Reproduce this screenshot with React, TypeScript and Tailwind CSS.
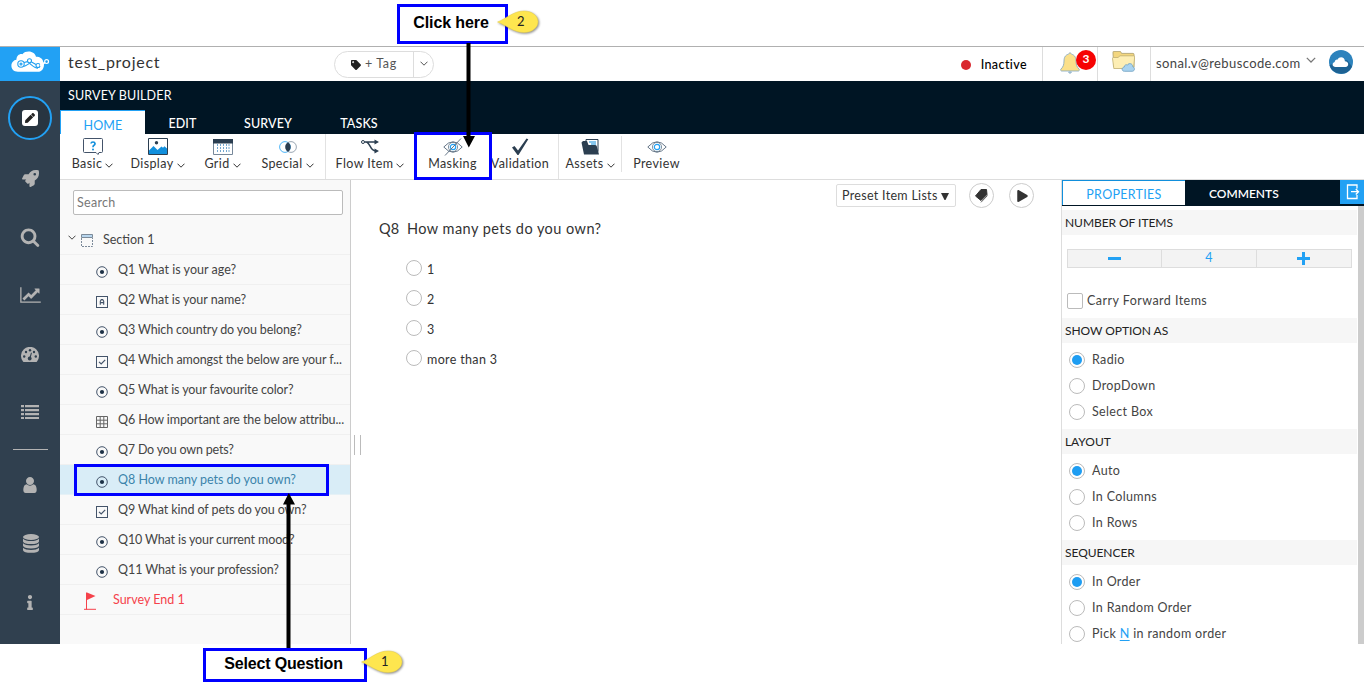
import React, { useState } from 'react';
import { FaRocket, FaInfo, FaTag, FaPen, FaPlay } from 'react-icons/fa';

type QuestionKind = 'radio' | 'text' | 'check' | 'grid';

const questions: { id: string; kind: QuestionKind; label: string; tracking: string }[] = [
  { id: 'Q1', kind: 'radio', label: 'Q1 What is your age?', tracking: 'tracking-[0.03px]' },
  { id: 'Q2', kind: 'text', label: 'Q2 What is your name?', tracking: 'tracking-[-0.02px]' },
  { id: 'Q3', kind: 'radio', label: 'Q3 Which country do you belong?', tracking: 'tracking-[-0.13px]' },
  { id: 'Q4', kind: 'check', label: 'Q4 Which amongst the below are your f...', tracking: 'tracking-[-0.1px]' },
  { id: 'Q5', kind: 'radio', label: 'Q5 What is your favourite color?', tracking: 'tracking-[-0.1px]' },
  { id: 'Q6', kind: 'grid', label: 'Q6 How important are the below attribu...', tracking: 'tracking-[-0.1px]' },
  { id: 'Q7', kind: 'radio', label: 'Q7 Do you own pets?', tracking: 'tracking-[-0.19px]' },
  { id: 'Q8', kind: 'radio', label: 'Q8 How many pets do you own?', tracking: 'tracking-[-0.02px]' },
  { id: 'Q9', kind: 'check', label: 'Q9 What kind of pets do you own?', tracking: 'tracking-[-0.08px]' },
  { id: 'Q10', kind: 'radio', label: 'Q10 What is your current mood?', tracking: 'tracking-[-0.13px]' },
  { id: 'Q11', kind: 'radio', label: 'Q11 What is your profession?', tracking: 'tracking-[-0.06px]' },
];

const Chevron: React.FC<{ className?: string }> = ({ className = 'w-2 h-[5px]' }) => (
  <svg viewBox="0 0 8 5" className={className} fill="none" stroke="currentColor" strokeWidth="1">
    <path d="M0.5 0.7 4 4.2 7.5 0.7" />
  </svg>
);

const QuestionIcon: React.FC<{ kind: QuestionKind }> = ({ kind }) => (
  <svg viewBox="0 0 12 12" className="w-3 h-3 shrink-0 relative top-[2px]" fill="none" stroke="#44546a" strokeWidth="1">
    {kind === 'radio' && (
      <>
        <circle cx="6" cy="6" r="5.3" />
        <circle cx="6" cy="6" r="2.1" fill="#1d3146" stroke="none" />
      </>
    )}
    {kind === 'text' && (
      <>
        <rect x="0.5" y="0.5" width="11" height="11" />
        <path d="M4.3 8.8V5.2L5.300 3.600h1.400l1 1.600v3.600M4.300 6.600h3.400" strokeWidth="1.100" />
      </>
    )}
    {kind === 'check' && (
      <>
        <rect x="0.5" y="0.5" width="11" height="11" />
        <path d="M3 5.800 5.200 8 9.200 3.800" strokeWidth="1.200" />
      </>
    )}
    {kind === 'grid' && (
      <path d="M0.5 0.5h11v11H0.5zM4.2 0.5v11M7.8 0.5v11M0.5 4.2h11M0.5 7.8h11" stroke="#666" />
    )}
  </svg>
);

const Logo = () => (
  <svg viewBox="0 0 40 22" className="w-10 h-[22px] relative -top-[2px]">
    <path
      d="M8 20.8C3.6 20.8 1.4 18 1.4 14.8c0-3.3 2.300-5.700 5-6C6.600 4.800 9.400 2.600 12.400 3.200 13.800 1 16.200 0.400 18.600 0.400c4 0 6.800 2.400 7.400 5.400 4 0 6.800 2 7.200 5l0.800 2.600c0 4-2.300 7.400-6 7.400z"
      fill="#fff"
    />
    <g fill="none" stroke="#1f9ff0" strokeWidth="1.100">
      <circle cx="11" cy="13" r="3.200" />
      <circle cx="11" cy="13" r="1" />
      <circle cx="19.500" cy="9.800" r="2" />
      <circle cx="28" cy="14.500" r="2" />
      <path d="M14 11.500 17.500 10.600M21.500 11l4.500 2.600M13.500 15.500c3-0.500 5-3 6-3s4 4.600 8.500 4.600" />
    </g>
    <path d="M30 14.500 35 11.500" stroke="#fff" strokeWidth="1.600" />
    <circle cx="36.600" cy="10.600" r="1.900" fill="#1f9ff0" stroke="#fff" strokeWidth="1.200" />
  </svg>
);

const Sidebar = () => (
  <aside className="w-[60px] shrink-0 bg-[#30404f] flex flex-col items-center text-[#b3b3b3]">
    <div className="w-full h-[34px] bg-[#22a1f4] flex items-center justify-center">
      <Logo />
    </div>
    <div className="mt-[15px] w-11 h-11 rounded-full border-2 border-[#22a1f4] bg-[#283541] flex items-center justify-center">
      <div className="w-4 h-4 rounded-[3px] bg-white flex items-center justify-center">
        <FaPen className="w-[10px] h-[10px] text-[#222]" />
      </div>
    </div>
    <FaRocket className="mt-[30px] w-[17px] h-[17px]" />
    <svg viewBox="0 0 1792 1792" className="mt-[40px] w-[20px] h-[20px]" fill="currentColor">
      <path d="M1216 832q0-185-131.500-316.500t-316.500-131.500-316.500 131.500-131.500 316.500 131.500 316.500 316.500 131.500 316.500-131.500 131.500-316.500zm512 832q0 52-38 90t-90 38q-54 0-90-38l-343-342q-179 124-399 124-143 0-273.500-55.500t-225-150-150-225-55.500-273.500 55.500-273.500 150-225 225-150 273.500-55.500 273.500 55.500 225 150 150 225 55.500 273.500q0 220-124 399l343 343q37 37 37 90z" />
    </svg>
    <svg viewBox="0 0 2048 1792" className="mt-[39px] w-[21px] h-[18px]" fill="currentColor">
      <path d="M2048 1536v128h-2048v-1536h128v1408h1920zm-128-1248v435q0 21-19.500 29.500t-35.500-7.500l-121-121-633 633q-10 10-23 10t-23-10l-233-233-416 416-192-192 585-585q10-10 23-10t23 10l233 233 464-464-121-121q-16-16-7.500-35.500t29.500-19.500h435q14 0 23 9t9 23z" />
    </svg>
    <svg viewBox="0 0 18 15" className="mt-[43px] w-[18px] h-[15px]" fill="currentColor">
      <path d="M2 14.500A9 9 0 1 1 16 14.500q-0.500 0.500-1 0.500H3q-0.500 0-1-0.500z" />
      <g fill="#30404f">
        <circle cx="3.200" cy="9.500" r="1.200" />
        <circle cx="5" cy="5" r="1.200" />
        <circle cx="9" cy="3.200" r="1.200" />
        <circle cx="13" cy="5" r="1.200" />
        <circle cx="14.800" cy="9.500" r="1.200" />
        <circle cx="8.700" cy="11.500" r="1.900" />
        <path d="M8.300 11 10 5.600l0.900 0.300L9.500 11.500z" />
      </g>
    </svg>
    <svg viewBox="0 0 18 14" className="mt-[43px] w-[18px] h-[14px]" fill="currentColor">
      <path d="M0 0h3v2.300H0zM4 0h14v2.300H4zM0 4h3v2.300H0zM4 4h14v2.300H4zM0 8h3v2.300H0zM4 8h14v2.300H4zM0 12h3v2H0zM4 12h14v2H4z" />
    </svg>
    <div className="mt-[30px] w-[35px] h-px bg-[#b3b3b3]" />
    <svg viewBox="128 128 1536 1536" className="mt-[27px] w-4 h-4" fill="currentColor">
      <path d="M1536 1399q0 109-62.500 187t-150.500 78h-854q-88 0-150.500-78t-62.500-187q0-85 8.500-160.500t31.500-152 58.500-131 94-89 134.500-34.500q131 128 313 128t313-128q76 0 134.500 34.500t94 89 58.500 131 31.500 152 8.500 160.500zm-256-887q0 159-112.500 271.500t-271.500 112.500-271.500-112.500-112.500-271.500 112.500-271.500 271.500-112.500 271.500 112.500 112.500 271.500z" />
    </svg>
    <svg viewBox="0 0 16 19" className="mt-[41px] w-4 h-[19px] relative left-px" fill="currentColor">
      <ellipse cx="8" cy="3" rx="8" ry="3" />
      <path d="M0 4.800q2.500 2.300 8 2.300t8-2.300v2.700q-1 2.600-8 2.600T0 7.500zM0 9.300q2.500 2.200 8 2.200t8-2.200v2.500q-1 2.600-8 2.600t-8-2.600zM0 13.700q2.500 2.200 8 2.200t8-2.200v2.500q-1 2.600-8 2.600t-8-2.600z" />
    </svg>
    <FaInfo className="mt-[42px] w-4 h-[15px]" />
  </aside>
);

const Header = () => (
  <header className="h-[34px] shrink-0 bg-white flex items-center text-[#333]">
    <div className="w-[274px] pl-2 text-base tracking-[0.75px] pb-[4px]">test_project</div>
    <div className="flex items-stretch w-[100px] h-[27px] rounded-full border border-[#ddd] text-[12.5px] tracking-[0.6px] text-[#555]">
      <div className="flex-1 flex items-center gap-1 pl-4 pt-px">
        <FaTag className="w-[10px] h-[10px] text-[#222]" />
        <span>+ Tag</span>
      </div>
      <div className="w-[20px] border-l border-[#ddd] flex items-center justify-center pb-[2px]">
        <Chevron />
      </div>
    </div>
    <div className="ml-auto flex h-full items-stretch">
      <div className="flex items-center gap-[10px] pr-[15px] pt-[2px] text-[12.5px] font-medium tracking-[0.4px] text-black">
        <span className="w-[10px] h-[10px] rounded-full bg-[#d9272e]" />
        Inactive
      </div>
      <div className="w-[55px] border-l border-[#ddd] relative">
        <svg viewBox="0 0 20 22" className="absolute left-[17px] top-[5px] w-5 h-[22px]" fill="#fbe08a" stroke="#7fa3bd" strokeWidth="0.800">
          <path d="M8.500 20h3L10 21.600z" fill="#c5e2f5" />
          <path d="M10 0.500 11.500 2.200C15 3 16 6 16 9c0 4 1 6 3.200 8.300 0.500 1-0.200 1.700-1 1.700H1.800c-0.800 0-1.500-0.700-1-1.700C3 15 4 13 4 9c0-3 1-6 4.500-6.800z" />
        </svg>
        <span className="absolute left-[33px] top-[3px] w-5 h-5 rounded-full bg-[#f60303] text-white text-xs font-bold flex items-center justify-center pb-[3px]">3</span>
      </div>
      <div className="w-[53px] border-l border-[#ddd]">
        <svg viewBox="0 0 23 21" className="mt-[4px] ml-[14px] w-[23px] h-[21px]" strokeWidth="0.800">
          <path d="M1 3V1q0-0.600 0.600-0.600H8q0.600 0 0.900 0.600l0.600 1.400H21q1 0 1 1V16H2z" fill="#f3d67e" stroke="#a99c68" />
          <path d="M0.500 7.500q0-1 1-1H6l2-1.700h14q0.800 0 0.700 1L21.500 17.500H1.800z" fill="#fdeeb4" stroke="#bfae70" />
          <path d="M12.500 20.300c-3 0-3.200-3.800-0.300-4.200 0-2 2-2.900 3.300-2 1.200-2.600 5.300-1.700 5.200 1.600 2.500 0.600 2.300 4.600-0.500 4.600z" fill="#a9d3ef" stroke="#6e9fc0" />
        </svg>
      </div>
      <div className="border-l border-[#ddd] w-[214px] pl-[5px] flex items-center">
        <span className="text-[13px] tracking-[0.4px] text-[#444] w-[150px] whitespace-nowrap">sonal.v@rebuscode.com</span>
        <Chevron className="w-[10px] h-[6px] mb-2 text-[#777]" />
        <svg viewBox="0 0 24 24" className="w-6 h-6 ml-[13px] mb-1">
          <circle cx="12" cy="12" r="12" fill="#2d83bd" />
          <path d="M0.500 15a12 12 0 0 0 22.500 1.500L18 10z" fill="#1d6293" />
          <path d="M6.500 17c-3.300 0-4-4-0.800-5 0-2 1.800-2.900 3-2.400 1.400-4 7.400-2.800 7.200 1.700 4.300 0 4.300 5.700 0.600 5.700z" fill="#fff" />
        </svg>
      </div>
    </div>
  </header>
);

const navTabs = [
  { label: 'EDIT', width: 'w-[75px]' },
  { label: 'SURVEY', width: 'w-[96px]' },
  { label: 'TASKS', width: 'w-[86px]' },
];

const NavBar = () => (
  <nav className="h-[53px] shrink-0 bg-[#001524] text-white flex flex-col">
    <div className="h-[29px] pl-2 text-[12.5px] leading-[30px] tracking-[0.15px]">SURVEY BUILDER</div>
    <div className="flex h-6 text-[12.5px] font-medium tracking-[0.1px]">
      <div className="w-[85px] border-t border-l border-[#22a1f4] bg-white text-[#22a1f4] text-center font-normal leading-[29px]">HOME</div>
      {navTabs.map((tab) => (
        <div key={tab.label} className={`${tab.width} text-center leading-[28px]`}>{tab.label}</div>
      ))}
    </div>
  </nav>
);

const Eye: React.FC<{ slashed?: boolean }> = ({ slashed }) => (
  <svg viewBox="0 0 20 18" className="w-5 h-[18px]" fill="none" stroke="#53677a" strokeWidth="0.900">
    <path d="M0.800 9Q10-1.500 19.200 9 10 19.500 0.800 9z" />
    <circle cx="10" cy="9" r="4.600" strokeWidth="0.700" />
    <circle cx="10" cy="9" r="2.700" stroke="#22a1f4" strokeWidth="1.200" />
    {slashed && <path d="M2 17.500 18 0.500" />}
  </svg>
);

interface RibbonItemProps {
  label: string;
  width: string;
  menu?: boolean;
  children: React.ReactNode;
}

const RibbonItem: React.FC<RibbonItemProps> = ({ label, width, menu, children }) => (
  <div className={`${width} shrink-0 flex flex-col items-center text-[#333]`}>
    <div className="h-[21px] mt-[2px] flex items-center justify-center">{children}</div>
    <div className="flex items-center gap-[3px] text-[12.5px] leading-[14px] tracking-[0.4px] whitespace-nowrap">
      <span>{label}</span>
      {menu && <Chevron className="w-2 h-[5px] mt-[3px]" />}
    </div>
  </div>
);

const Ribbon = () => (
  <div className="h-[46px] shrink-0 bg-white border-b border-[#ddd] flex">
    <RibbonItem label="Basic" width="w-[65px]" menu>
      <svg viewBox="0 0 20 18" className="w-5 h-[18px]">
        <path d="M1.500 0.500h17q1 0 1 1v12q0 1-1 1H16l-1 2-2-2H1.500q-1 0-1-1v-12q0-1 1-1z" fill="#fff" stroke="#44546a" />
        <path d="M8 5.500Q8.200 4 10 4t2 1.700q0 1-1 1.600T10 9.300" fill="none" stroke="#118fdc" strokeWidth="1.700" />
        <circle cx="10" cy="11.500" r="1" fill="#118fdc" />
      </svg>
    </RibbonItem>
    <RibbonItem label="Display" width="w-[65px]" menu>
      <svg viewBox="0 0 20 17" className="w-5 h-[17px]">
        <path d="M0.500 0.500h19v16H0.500z" fill="#fff" stroke="#2b3e50" />
        <path d="M1 12.500 5.500 8l4 4 4-3.500 1.500 1.200 1.500-1.500 2.500 2.300V16H1z" fill="#118fdc" />
        <circle cx="8.500" cy="4.800" r="1.700" fill="#2b3e50" />
      </svg>
    </RibbonItem>
    <RibbonItem label="Grid" width="w-[65px]" menu>
      <svg viewBox="0 0 20 16" className="w-5 h-4">
        <path d="M0.500 0.500h19v15H0.500z" fill="#fff" stroke="#77889a" />
        <path d="M0 0h20v4.500H0z" fill="#2b3e50" />
        <path d="M4.500 5v9M7.500 5v9M10.500 5v9M13.500 5v9M16 5v9" stroke="#73a7cf" strokeDasharray="2 1" />
      </svg>
    </RibbonItem>
    <RibbonItem label="Special" width="w-[65px]" menu>
      <svg viewBox="0 0 18 12" className="w-[18px] h-3" fill="none">
        <circle cx="6" cy="6" r="5.400" stroke="#22a1f4" strokeWidth="0.800" />
        <circle cx="12" cy="6" r="5.400" stroke="#8291a0" strokeWidth="0.800" />
        <path d="M9 1.300a5.500 5.500 0 0 1 0 9.400a5.500 5.500 0 0 1 0-9.400z" fill="#2b3e50" />
      </svg>
    </RibbonItem>
    <div className="w-[6px] border-r border-[#e2e2e2]" />
    <RibbonItem label="Flow Item" width="w-[88px]" menu>
      <svg viewBox="0 0 18 15" className="w-[18px] h-[15px]" fill="none" stroke="#2b3e50" strokeWidth="1.500">
        <circle cx="2" cy="3" r="1.500" strokeWidth="1" />
        <path d="M3.500 3H15M5 3c4 0 4 9 9.500 9H15" />
        <path d="M13.500 0.500 18 3l-4.500 2.500zM13.500 9.500 18 12l-4.500 2.500z" fill="#2b3e50" stroke="none" />
      </svg>
    </RibbonItem>
    <RibbonItem label="Masking" width="w-[77px]">
      <Eye slashed />
    </RibbonItem>
    <RibbonItem label="Validation" width="w-[58px]">
      <svg viewBox="0 0 18 17" className="w-[18px] h-[17px]">
        <path d="M1 9.500 3.500 8 7 12.500 15.500 0.500l1.800 0.800L7.500 17H6.500z" fill="#2b3e50" />
      </svg>
    </RibbonItem>
    <div className="w-[10px] border-r border-[#e2e2e2]" />
    <RibbonItem label="Assets" width="w-[62px]" menu>
      <svg viewBox="0 0 18 16" className="w-[18px] h-4">
        <path d="M5 0.500h12v12H5z" fill="#fff" stroke="#2b3e50" />
        <path d="M8 3h7M10 5h5" stroke="#118fdc" />
        <path d="M0.500 3.500 2 2h4l1.500 4H14q1.500 0 1.800 1.300L18 15.500H3z" fill="#2b3e50" />
      </svg>
    </RibbonItem>
    <div className="w-px h-9 mt-[2px] bg-[#e2e2e2]" />
    <RibbonItem label="Preview" width="w-[69px]">
      <Eye />
    </RibbonItem>
  </div>
);

interface QuestionListProps {
  selected: string;
  onSelect: (id: string) => void;
}

const QuestionList: React.FC<QuestionListProps> = ({ selected, onSelect }) => (
  <div className="w-[291px] shrink-0 bg-[#f9f9f9] border-r border-[#ccc] text-[12.5px] text-[#444]">
    <div className="pt-[10px] pl-[13px] pr-[7px]">
      <input
        type="text"
        placeholder="Search"
        className="block w-full h-[25px] px-[3px] rounded-[2px] border border-[#bbb] bg-white tracking-[0.3px] placeholder:text-[#777]"
      />
    </div>
    <div className="mt-[10px] h-[30px] border-b border-[#f0f0f0] flex items-center">
      <Chevron className="ml-2 w-2 h-[5px] mb-[5px]" />
      <svg viewBox="0 0 12 13" className="ml-[5px] mt-[2px] w-3 h-[13px]" fill="none" stroke="#7c8a99">
        <path d="M0.500 4v8.500h11V4" strokeDasharray="2 1" />
        <path d="M0.500 0.500h11v3H0.500z" fill="#b8d6ee" />
      </svg>
      <span className="ml-[10px] pt-[2px]">Section 1</span>
    </div>
    {questions.map((q) => (
      <div
        key={q.id}
        onClick={() => onSelect(q.id)}
        className={`h-[30px] pl-9 flex items-center gap-[10px] border-b cursor-pointer whitespace-nowrap ${
          q.id === selected ? 'bg-[#d9edf7] border-[#e6f1f6] text-[#3c84ab]' : 'border-[#f0f0f0]'
        }`}
      >
        <QuestionIcon kind={q.kind} />
        <span className={`pt-[2px] ${q.tracking}`}>{q.label}</span>
      </div>
    ))}
    <div className="h-[30px] border-b border-[#f0f0f0] pl-6 flex items-center text-[#f5424b]">
      <svg viewBox="0 0 12 18" className="w-3 h-[18px] mt-[2px]">
        <path d="M2.500 0.500v17M0 17.300h12" stroke="#f5424b" strokeWidth="1" />
        <path d="M3 0.500 11.500 4 3 8z" fill="#f5424b" />
      </svg>
      <span className="ml-[17px] pt-[2px]">Survey End 1</span>
    </div>
  </div>
);

const Canvas = () => (
  <main className="flex-1 bg-white text-[#333] flex">
    <div className="w-[10px] pl-[3px] self-start mt-[255px] flex gap-[5px]">
      <span className="w-px h-5 bg-[#bbb] shrink-0" />
      <span className="w-px h-5 bg-[#bbb] shrink-0" />
    </div>
    <div className="flex-1">
      <div className="flex justify-end items-start pr-[27px] pt-[3px]">
        <div className="mt-px w-[120px] h-[23px] border border-[#ddd] rounded-[2px] flex items-center pl-[5px] pt-px text-[12.5px] tracking-[0.3px] whitespace-nowrap">
          <span className="w-[99px]">Preset Item Lists</span>
          <svg viewBox="0 0 8 7" className="w-2 h-[7px] mt-px">
            <path d="M0 0h8L4.500 7h-1z" fill="#333" />
          </svg>
        </div>
        <div className="ml-[13px] w-[25px] h-[25px] rounded-full border border-[#ccc] flex items-center justify-center">
          <svg viewBox="0 0 13 14" className="w-[13px] h-[14px]">
            <path d="M6 0.500h5.500l0.500 5L6 11.500 0.500 7z" fill="#333" stroke="#333" strokeLinejoin="round" />
            <path d="M6 13.300 12.500 6.500" stroke="#333" strokeWidth="0.800" />
          </svg>
        </div>
        <div className="ml-[15px] w-[25px] h-[25px] rounded-full border border-[#ccc] flex items-center justify-center">
          <FaPlay className="w-[11px] h-3 ml-[2px] text-[#333]" />
        </div>
      </div>
      <div className="pl-[18px] mt-[9px] leading-[24px] flex text-[14.5px]">
        <span className="w-[28px] tracking-[0.2px]">Q8</span>
        <span className="tracking-[0.45px]">How many pets do you own?</span>
      </div>
      <div className="pl-[45px] mt-[13px] text-[12.5px]">
        {['1', '2', '3', 'more than 3'].map((option) => (
          <label key={option} className="flex items-center h-[30px]">
            <span className="w-4 h-4 rounded-full border border-[#bbb] mb-[2px]" />
            <span className="ml-[5px] mt-[3px] tracking-[0.35px]">{option}</span>
          </label>
        ))}
      </div>
    </div>
  </main>
);

const SectionTitle: React.FC<{ children: React.ReactNode }> = ({ children }) => (
  <div className="h-[25px] bg-[#f6f6f6] pl-[3px] text-xs leading-[26px] tracking-[-0.05px] text-[#222]">{children}</div>
);

interface RadioGroupProps {
  title: string;
  options: { key: string; label: React.ReactNode }[];
  initial: string;
}

const RadioGroup: React.FC<RadioGroupProps> = ({ title, options, initial }) => {
  const [value, setValue] = useState<string>(initial);

  return (
    <div className="h-[111px]">
      <SectionTitle>{title}</SectionTitle>
      <div className="pt-1 pl-[7px]">
        {options.map((option) => (
          <div key={option.key} className="h-[26px] flex items-center gap-[7px] cursor-pointer" onClick={() => setValue(option.key)}>
            <span className="w-4 h-4 rounded-full border border-[#bbb] bg-white flex items-center justify-center">
              {value === option.key && <span className="w-[10px] h-[10px] rounded-full bg-[#1e9df2]" />}
            </span>
            <span className="pt-px tracking-[0.35px]">{option.label}</span>
          </div>
        ))}
      </div>
    </div>
  );
};

const PropertiesPanel = () => (
  <div className="w-[303px] shrink-0 border-l border-[#ddd] bg-white text-[12.5px] text-[#444] flex flex-col overflow-hidden">
    <div className="h-[26px] shrink-0 bg-[#001524] border-b border-[#001524] flex">
      <div className="w-[123px] bg-white border-t border-l border-[#118fdc] text-[#22a1f4] text-center leading-[28px] tracking-[0.3px]">PROPERTIES</div>
      <div className="flex-1 pl-6 text-white text-xs font-semibold leading-[27px]">COMMENTS</div>
      <div className="w-6 h-6 bg-[#22a1f4] flex items-center justify-center">
        <svg viewBox="0 0 14 16" className="w-[14px] h-4 ml-[2px]" fill="none" stroke="#fff" strokeWidth="1.300">
          <path d="M11 4.500V1H1.500v13.500H11V11" />
          <path d="M5 7.700h7M9.800 5 12.500 7.700 9.800 10.500" />
        </svg>
      </div>
    </div>
    <div className="flex flex-1 min-h-0">
      <div className="w-[295px] pt-1 overflow-hidden">
        <div className="h-[108px]">
          <SectionTitle>NUMBER OF ITEMS</SectionTitle>
          <div className="mt-[14px] ml-[5px] w-[285px] h-[19px] border border-[#ddd] bg-[#f3f3f3] grid grid-cols-3 divide-x divide-[#ddd] text-[#22a1f4]">
            <div className="h-[17px] flex items-center justify-center">
              <span className="w-[13px] h-[3px] bg-[#22a1f4]" />
            </div>
            <div className="h-[17px] leading-4 text-center">4</div>
            <div className="h-[17px] flex items-center justify-center">
              <svg viewBox="0 0 13 13" className="w-[13px] h-[13px]">
                <path d="M5 0h3v5h5v3H8v5H5V8H0V5h5z" fill="currentColor" />
              </svg>
            </div>
          </div>
          <div className="mt-[24px] pl-[5px] flex items-center gap-1">
            <span className="w-4 h-4 mt-px rounded-[2px] border border-[#bbb] bg-white" />
            <span className="leading-4 tracking-[0.45px]">Carry Forward Items</span>
          </div>
        </div>
        <RadioGroup
          title="SHOW OPTION AS"
          initial="radio"
          options={[
            { key: 'radio', label: 'Radio' },
            { key: 'dropdown', label: 'DropDown' },
            { key: 'select', label: 'Select Box' },
          ]}
        />
        <RadioGroup
          title="LAYOUT"
          initial="auto"
          options={[
            { key: 'auto', label: 'Auto' },
            { key: 'columns', label: 'In Columns' },
            { key: 'rows', label: 'In Rows' },
          ]}
        />
        <RadioGroup
          title="SEQUENCER"
          initial="order"
          options={[
            { key: 'order', label: 'In Order' },
            { key: 'random', label: 'In Random Order' },
            { key: 'pick', label: <>Pick <span className="text-[#22a1f4] underline underline-offset-2">N</span> in random order</> },
          ]}
        />
      </div>
      <div className="ml-auto w-[6px] bg-[#ccc]" />
    </div>
  </div>
);

const Balloon: React.FC<{ value: string; className: string }> = ({ value, className }) => (
  <div className={`absolute w-[43px] h-[25px] ${className}`}>
    <svg viewBox="0 0 43 25" className="w-full h-full drop-shadow-[1px_1px_1px_rgba(0,0,0,0.45)]">
      <path d="M0.500 12C8 9.500 16 1 27 1c8 0 14 4.800 14 10.700S35 22.500 27 22.500C16 22.500 8 14.500 0.500 12z" fill="#fee64f" stroke="#e6cf48" strokeWidth="0.500" />
    </svg>
    <span className="absolute left-[20px] top-[3px] w-2 text-[13px] leading-4 text-[#222]">{value}</span>
  </div>
);

// Callout boxes and arrows drawn over the app
const Annotations = () => (
  <>
    <div className="absolute left-[397px] top-1 w-[111px] h-[40px] border-[3px] border-[#0000ff] bg-white flex items-center justify-center pr-[3px] pb-[3px] font-['Liberation_Sans',sans-serif] font-bold text-base tracking-[-0.1px] text-black">
      Click here
    </div>
    <Balloon value="2" className="left-[497px] top-[10px]" />
    <div className="absolute left-[414px] top-[132px] w-[78px] h-[48px] border-[3px] border-[#0000ff]" />
    <svg viewBox="0 0 12 105" className="absolute left-[463px] top-[43px] w-3 h-[105px]">
      <path d="M3.500 0h4v93H12L5.800 104.500 0 93h3.500z" fill="#000" />
    </svg>
    <div className="absolute left-[74px] top-[464px] w-[255px] h-[32px] border-[3px] border-[#0000ff]" />
    <svg viewBox="0 0 12 156" className="absolute left-[283px] top-[493px] w-3 h-[156px]">
      <path d="M3.500 156h4V11.500H12L5.800 0 0 11.500h3.500z" fill="#000" />
    </svg>
    <div className="absolute left-[203px] top-[648px] w-[164px] h-[34px] border-[3px] border-[#0000ff] bg-white flex items-center justify-center pr-[3px] pb-[2px] font-['Liberation_Sans',sans-serif] font-bold text-base tracking-[-0.15px] text-black">
      Select Question
    </div>
    <Balloon value="1" className="left-[361px] top-[650px]" />
  </>
);

const App: React.FC = () => {
  const [selected, setSelected] = useState<string>('Q8');

  return (
    <div className="relative w-[1364px] h-[688px] pt-[46px] overflow-hidden bg-white font-[Lato,sans-serif]">
      <div className="h-[598px] border-t border-[#b0b0b0] flex">
        <Sidebar />
        <div className="flex-1 min-w-0 flex flex-col">
          <Header />
          <NavBar />
          <Ribbon />
          <div className="flex flex-1 min-h-0">
            <QuestionList selected={selected} onSelect={setSelected} />
            <Canvas />
            <PropertiesPanel />
          </div>
        </div>
      </div>
      <Annotations />
    </div>
  );
};

export default App;
